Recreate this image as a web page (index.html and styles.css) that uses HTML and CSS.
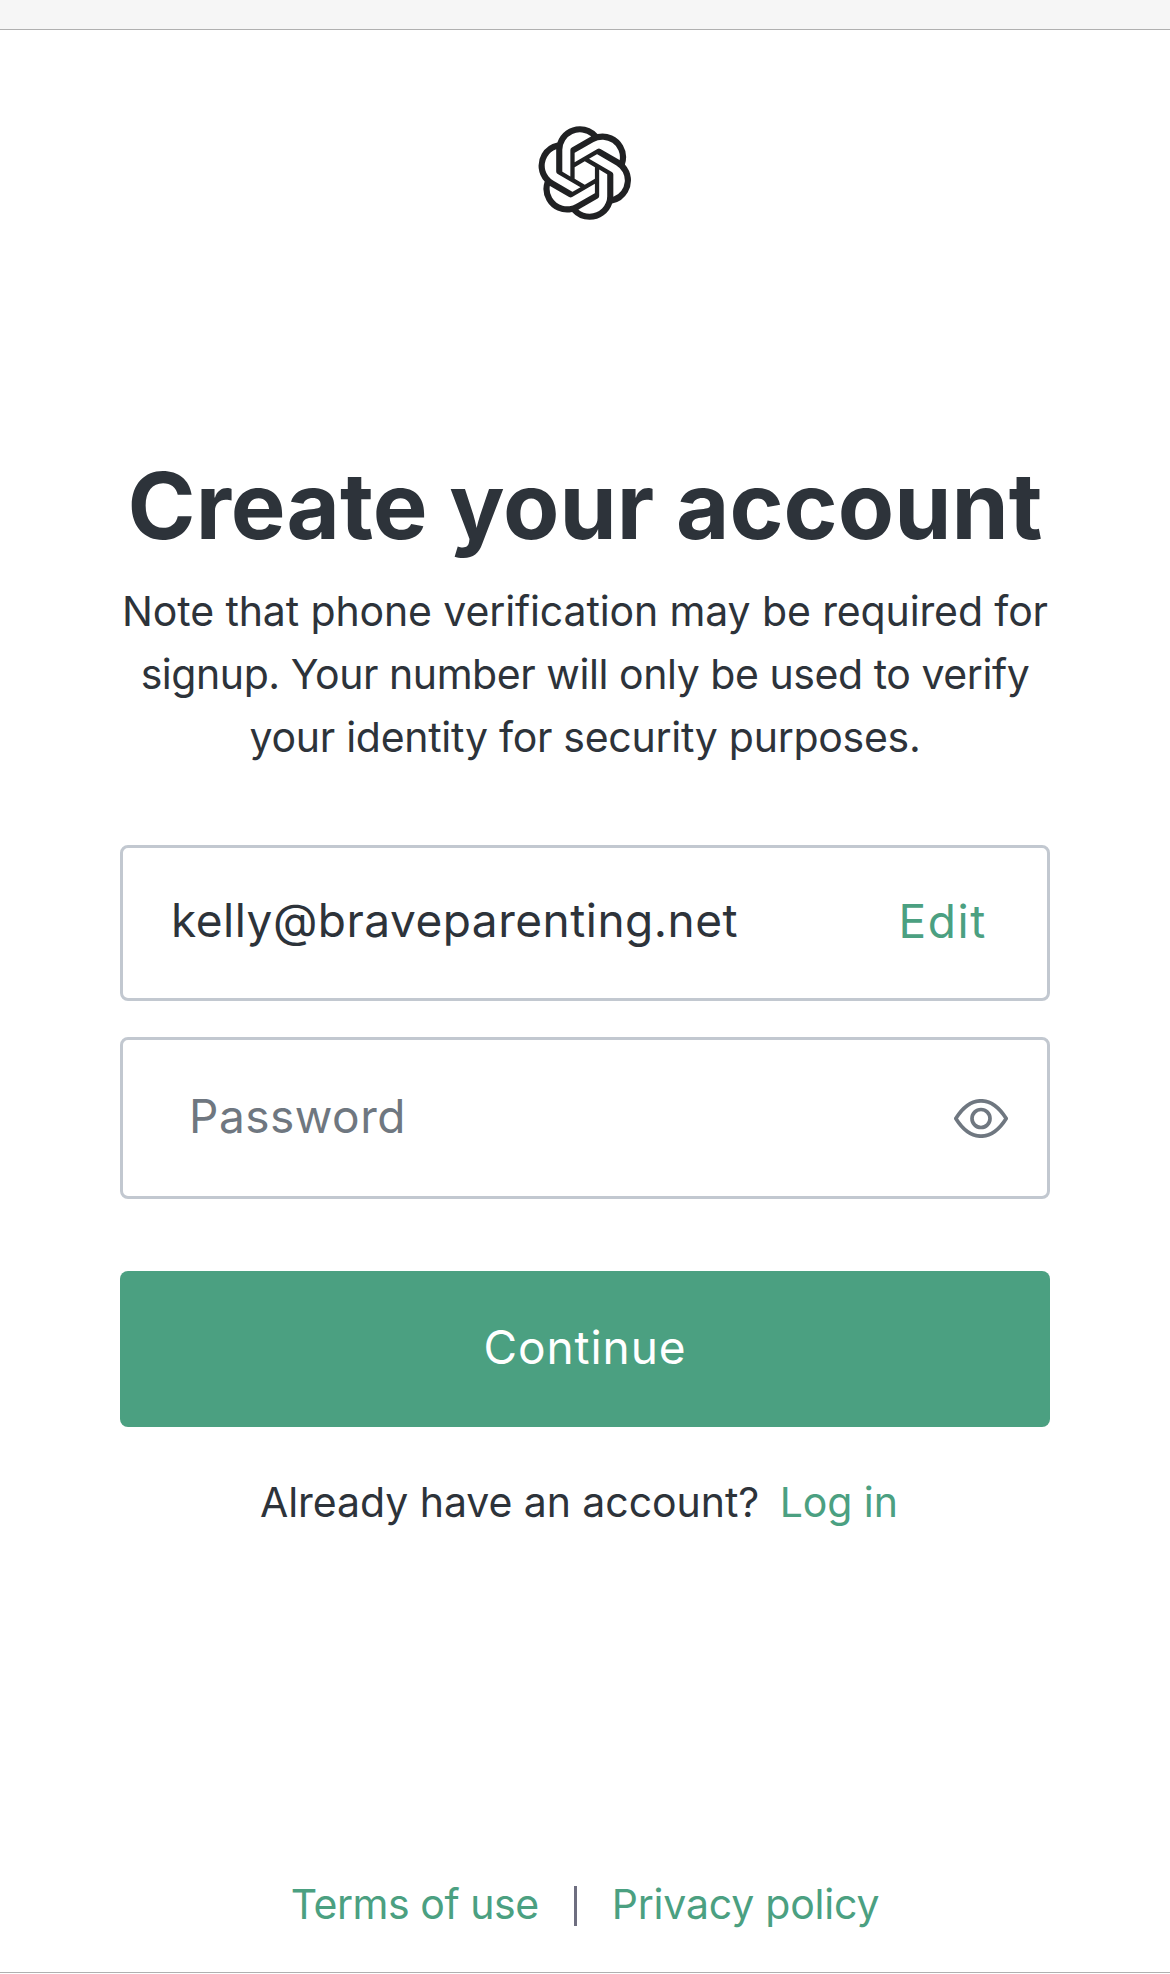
FILE: index.html
```
<!DOCTYPE html>
<html lang="en">
<head>
  <meta charset="UTF-8">
  <meta name="viewport" content="width=device-width, initial-scale=1.0">
  <title>Create your account</title>
  <link rel="stylesheet" href="styles.css">
</head>
<body>
  <div class="top-bar"></div>

  <header class="header">
    <svg class="logo" viewBox="0 0 41 41" fill="#202123" aria-label="Logo">
      <path d="M37.532 16.87a9.963 9.963 0 0 0-.856-8.184 10.078 10.078 0 0 0-10.855-4.835A9.964 9.964 0 0 0 18.306.5a10.079 10.079 0 0 0-9.614 6.977 9.967 9.967 0 0 0-6.664 4.834 10.08 10.08 0 0 0 1.24 11.817 9.965 9.965 0 0 0 .856 8.185 10.079 10.079 0 0 0 10.855 4.835 9.965 9.965 0 0 0 7.516 3.35 10.078 10.078 0 0 0 9.617-6.981 9.967 9.967 0 0 0 6.663-4.834 10.079 10.079 0 0 0-1.243-11.813ZM22.498 37.886a7.474 7.474 0 0 1-4.799-1.735c.061-.033.168-.091.237-.134l7.964-4.6a1.294 1.294 0 0 0 .655-1.134V19.054l3.366 1.944a.12.12 0 0 1 .066.092v9.299a7.505 7.505 0 0 1-7.49 7.496ZM6.392 31.006a7.471 7.471 0 0 1-.894-5.023c.06.036.162.099.237.141l7.964 4.6a1.297 1.297 0 0 0 1.308 0l9.724-5.614v3.888a.12.12 0 0 1-.048.103l-8.051 4.649a7.504 7.504 0 0 1-10.24-2.744ZM4.297 13.62A7.469 7.469 0 0 1 8.2 10.333c0 .068-.004.19-.004.274v9.201a1.294 1.294 0 0 0 .654 1.132l9.723 5.614-3.366 1.944a.12.12 0 0 1-.114.01L7.04 23.856a7.504 7.504 0 0 1-2.743-10.237Zm27.658 6.437-9.724-5.615 3.367-1.943a.121.121 0 0 1 .113-.01l8.052 4.648a7.498 7.498 0 0 1-1.158 13.528v-9.476a1.293 1.293 0 0 0-.65-1.132Zm3.35-5.043c-.059-.037-.162-.099-.236-.141l-7.965-4.6a1.298 1.298 0 0 0-1.308 0l-9.723 5.614v-3.888a.12.12 0 0 1 .048-.103l8.05-4.645a7.497 7.497 0 0 1 11.135 7.763Zm-21.063 6.929-3.367-1.944a.12.12 0 0 1-.065-.092v-9.299a7.497 7.497 0 0 1 12.293-5.756 6.94 6.94 0 0 0-.236.134l-7.965 4.6a1.294 1.294 0 0 0-.654 1.132l-.006 11.225Zm1.829-3.943 4.33-2.501 4.332 2.5v5l-4.331 2.5-4.331-2.5V18Z"/>
    </svg>
  </header>

  <main class="content">
    <h1>Create your account</h1>
    <p class="note">
      <span class="note-line">Note that phone verification may be required for</span>
      <span class="note-line note-tight">signup. Your number will only be used to verify</span>
      <span class="note-line note-snug">your identity for security purposes.</span>
    </p>

    <form class="signup-form">
      <div class="field email-field">
        <span class="email">kelly@braveparenting.net</span>
        <a href="#" class="edit">Edit</a>
      </div>
      <div class="field password-field">
        <input type="password" class="password" placeholder="Password" aria-label="Password">
        <svg class="eye" viewBox="0 0 54 39" fill="none" stroke="#6f7780" stroke-width="3.7" stroke-linejoin="round" aria-hidden="true">
          <path d="M1.8 19.5C9 8 17.500 1.800 27 1.800S45 8 52.200 19.500C45 31 36.500 37.200 27 37.200S9 31 1.800 19.500Z"/>
          <circle cx="27" cy="19.500" r="9"/>
        </svg>
      </div>
      <button type="submit" class="button">Continue</button>
    </form>

    <p class="login">Already have an account? <a href="#">Log in</a></p>
  </main>

  <footer class="footer">
    <a href="#" class="terms">Terms of use</a>
    <span class="divider"></span>
    <a href="#" class="privacy">Privacy policy</a>
  </footer>
</body>
</html>
```
FILE: styles.css
```
* {
  box-sizing: border-box;
}

body {
  margin: 0;
  height: 1973px;
  display: flex;
  flex-direction: column;
  align-items: center;
  border-bottom: 1px solid #b0b0b0;
  background-color: #fff;
  color: #2d333a;
  font-family: Inter, sans-serif;
  font-size: 41px;
  line-height: 63px;
}

a {
  color: #4ba081;
  text-decoration: none;
}

.top-bar {
  width: 100%;
  height: 30px;
  flex-shrink: 0;
  background-color: #f6f6f6;
  border-bottom: 1px solid #b0b0b0;
}

.header {
  height: 421px;
  flex-shrink: 0;
  padding-top: 95px;
}

.logo {
  display: block;
  width: 96px;
  height: 96px;
}

.content {
  width: 930px;
}

h1 {
  margin: 0 -10px 19px;
  font-size: 92px;
  font-weight: 700;
  line-height: 110px;
  text-align: center;
  white-space: nowrap;
}

.note {
  margin: 0 0 76px;
  text-align: center;
}

.note-line {
  display: block;
  letter-spacing: -0.12px;
  white-space: nowrap;
}

.note-tight {
  letter-spacing: -0.44px;
}

.note-snug {
  letter-spacing: -0.28px;
}

.field {
  display: flex;
  align-items: center;
  justify-content: space-between;
  border: 3px solid #c2c8d0;
  border-radius: 8px;
  font-size: 46px;
}

/* Email chosen in the previous step */
.email-field {
  height: 156px;
  margin-bottom: 36px;
  padding: 0 60px 5px 48px;
}

.email {
  letter-spacing: 0.5px;
}

.edit {
  padding-top: 2px;
  letter-spacing: 1.6px;
}

.password-field {
  height: 162px;
  margin-bottom: 72px;
  padding: 0 39px 0 66px;
}

.password {
  flex: 1;
  min-width: 0;
  padding: 0 0 3px;
  border: none;
  outline: none;
  background: none;
  color: #2d333a;
  font: inherit;
  letter-spacing: 0.5px;
}

.password::placeholder {
  color: #6f7780;
  opacity: 1;
}

.eye {
  width: 54px;
  height: 39px;
}

.button {
  display: block;
  width: 100%;
  height: 156px;
  padding: 0 0 4px;
  border: none;
  border-radius: 8px;
  background-color: #4ba081;
  color: #fff;
  font-family: inherit;
  font-size: 46px;
  letter-spacing: 0.9px;
  cursor: pointer;
}

.login {
  margin: 44px 0 0 140px;
  letter-spacing: -0.06px;
  white-space: nowrap;
}

.login a {
  margin-left: 9px;
}

.footer {
  display: flex;
  align-items: center;
  margin-top: auto;
  margin-bottom: 36px;
  white-space: nowrap;
}

.terms {
  letter-spacing: -0.45px;
}

.privacy {
  letter-spacing: -0.2px;
}

.divider {
  width: 3px;
  height: 40px;
  margin: 3px 35px 0;
  background-color: #6e6e80;
}
```
